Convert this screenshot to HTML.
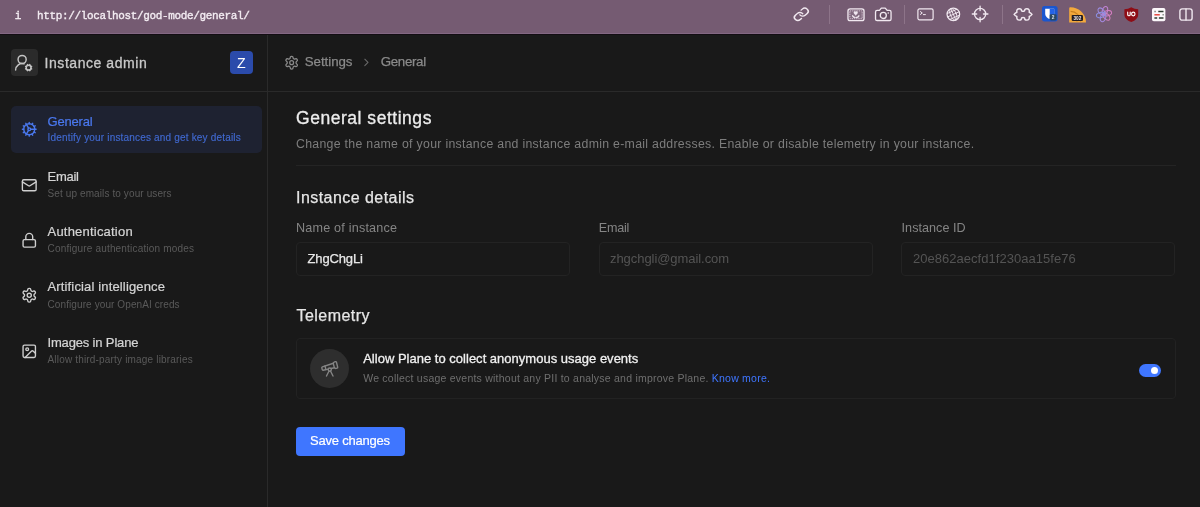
<!DOCTYPE html>
<html>
<head>
<meta charset="utf-8">
<title>General settings</title>
<style>
*{box-sizing:border-box;margin:0;padding:0}
html,body{width:1200px;height:507px;overflow:hidden;background:#191919}
body{font-family:"Liberation Sans",sans-serif;color:#e5e5e5;position:relative;-webkit-font-smoothing:antialiased}
.abs{position:absolute;white-space:nowrap;line-height:1}
svg{position:absolute;overflow:visible}
/* browser bar */
#bar{position:absolute;left:0;top:0;width:1200px;height:34px;background:#755b72;box-shadow:inset 0 -1px 0 #836883}
#barline{position:absolute;left:0;top:34px;width:1200px;height:1px;background:#130d13}
#bar .url{font-family:"Liberation Mono",monospace;font-weight:bold;color:#f3ecf2}
.sep{position:absolute;top:5px;width:1px;height:19px;background:#8d7489}
/* app */
#side{position:absolute;left:0;top:34px;width:268px;height:473px;border-right:1px solid #2a2a2a;background:#191919}
#hdr{position:absolute;left:0;top:34px;width:1200px;height:58px;border-bottom:1px solid #2a2a2a}
.active{position:absolute;left:10.5px;top:105.5px;width:251.5px;height:47.5px;background:#1e2231;border-radius:5px}
.t{font-size:13px;font-weight:normal;color:#d4d4d4;-webkit-text-stroke:0.22px #d4d4d4}
.s{font-size:10px;color:#5a5a5a}
.lbl{font-size:12.6px;color:#858585}
.inp{position:absolute;top:242px;height:33.5px;width:274px;border:1px solid #232323;border-radius:4px;background:#191919}
.h2{font-size:15.5px;color:#e6e6e6;-webkit-text-stroke:0.25px #e6e6e6}
</style>
</head>
<body>
<div id="root" style="position:absolute;left:0;top:0;width:1200px;height:507px;will-change:transform">
<!-- ============ browser toolbar ============ -->
<div id="bar">
  <span class="abs url" id="u0" style="left:14.7px;top:10.8px;font-size:11px;font-weight:normal;-webkit-text-stroke:0.35px #f3ecf2">i</span>
  <span class="abs url" id="u1" style="left:37px;top:10.8px;font-size:11px;letter-spacing:-0.35px;font-weight:normal;-webkit-text-stroke:0.35px #f3ecf2">http://localhost/god-mode/general/</span>
  <div class="sep" style="left:829px"></div>
  <div class="sep" style="left:904px"></div>
  <div class="sep" style="left:1001.5px"></div>
</div>

<!-- browser icons -->
<svg id="b_link" style="left:793.1px;top:6.7px" width="16.6" height="14.6" viewBox="0 0 24 24" preserveAspectRatio="none" fill="none" stroke="#f1e8f0" stroke-width="2.2" stroke-linecap="round" stroke-linejoin="round"><path d="M10 13a5 5 0 0 0 7.54.54l3-3a5 5 0 0 0-7.07-7.07l-1.72 1.71"/><path d="M14 11a5 5 0 0 0-7.54-.54l-3 3a5 5 0 0 0 7.07 7.07l1.71-1.71"/></svg>
<svg id="b_pic" style="left:847px;top:7.700px" width="18" height="13.600" viewBox="0 0 18 13.600" fill="none" stroke="#f1e8f0" stroke-width="1.300" stroke-linecap="round" stroke-linejoin="round"><rect x="0.950" y="0.950" width="16.100" height="11.700" rx="2.200" fill="rgba(255,255,255,0.100)"/><rect x="2.900" y="2.900" width="12.200" height="7.800" rx="0.400" stroke-width="0.900" stroke-dasharray="0.500 1.700" stroke="#dccbd9"/><path d="M8.750 7C5.400 5 7.200 2.300 8.750 3.900C10.300 2.300 12.100 5 8.750 7z" fill="#f1e8f0" stroke-width="0.400"/><path d="M5.600 7.800Q6.500 9.300 8 9.400M11.900 7.800Q11 9.300 9.500 9.400" stroke-width="1.400"/></svg>
<svg id="b_cam" style="left:873.90px;top:4.60px" width="18.600" height="18.600" viewBox="0 0 24 24" fill="none" stroke="#f1e8f0" stroke-width="1.700" stroke-linecap="round" stroke-linejoin="round"><path d="M14.500 4h-5L7 7H4a2 2 0 0 0-2 2v9a2 2 0 0 0 2 2h16a2 2 0 0 0 2-2V9a2 2 0 0 0-2-2h-3l-2.500-3z" fill="rgba(60,40,60,0.250)"/><circle cx="12" cy="13.500" r="3.900"/><path d="M18.400 10.400h.01" stroke-width="2"/></svg>
<svg id="b_term" style="left:917px;top:8px" width="17" height="13" viewBox="0 0 17 13" fill="none" stroke="#f1e8f0" stroke-width="1.2" stroke-linecap="round" stroke-linejoin="round" ><rect x="0.9" y="0.9" width="15.2" height="11" rx="1.6"/><path d="M3.4 3.6l1.9 1.4-1.9 1.4M6.4 6.6h2" stroke-width="1"/></svg>
<svg id="b_globe" style="left:946px;top:7px" width="15" height="15" viewBox="0 0 15 15" fill="none" stroke="#f1e8f0" stroke-width="1.250" stroke-linecap="round" stroke-linejoin="round"><circle cx="7.350" cy="7.350" r="6.300"/><g transform="rotate(-24 7.350 7.350)" stroke-width="0.850"><ellipse cx="7.350" cy="7.350" rx="2.900" ry="6.300"/><path d="M1.100 7.350h12.500M2.100 4.100h10.500M2.100 10.600h10.500M7.350 1.100v12.500"/></g></svg>
<svg id="b_cross" style="left:971px;top:5.4px" width="18" height="18" viewBox="0 0 18 18" fill="none" stroke="#f1e8f0" stroke-width="1.350" stroke-linecap="round"><circle cx="9.100" cy="9" r="5.600"/><path d="M9.100 1.200v4.400M9.100 12.400v4.400M1.300 9h4.400M12.500 9h4.400"/></svg>
<svg id="b_puz" style="left:1013px;top:7px" width="21" height="15" viewBox="0 0 21 15" fill="none" stroke="#f1e8f0" stroke-width="1.450" stroke-linecap="round" stroke-linejoin="round"><path d="M1.100 7.400Q2.300 5.800 3.900 5.300Q3.300 1.700 6.300 1.700Q8.600 1.700 8.600 3.900Q10.050 4.700 11.500 3.900Q11.500 1.700 13.800 1.700Q16.800 1.700 16.200 5.300Q17.800 5.800 19 7.400Q17.800 9 16.200 9.500Q16.800 13.100 13.800 13.100Q11.500 13.100 11.500 10.900Q10.050 10.100 8.600 10.900Q8.600 13.100 6.300 13.100Q3.300 13.100 3.900 9.500Q2.300 9 1.100 7.400z"/></svg>
<svg id="b_bw" style="left:1042.3px;top:6.4px" width="16" height="15.6" viewBox="0 0 16 15.600"><rect x="0" y="0" width="15.600" height="15.400" rx="2.600" fill="#1a56cf"/><path d="M3.200 2.800h9v5.200c0 2.700-2.700 4.400-4.500 5.100-1.800-.7-4.500-2.400-4.500-5.100z" fill="#fff"/><path d="M7.700 2.800h4.500v5.200c0 2.700-2.700 4.400-4.500 5.100z" fill="#2463e6"/><rect x="7.700" y="8.200" width="6.900" height="6.200" rx="1.300" fill="#2b475e"/><text x="11.150" y="13.100" font-family="Liberation Sans, sans-serif" font-size="4.800" font-weight="bold" fill="#d8e4ee" text-anchor="middle">2</text></svg>
<svg id="b_rss" style="left:1068px;top:6.500px" width="18.500" height="15.800" viewBox="0 0 18.500 15.800"><path d="M1.200 15.500V1.500c0-.7.500-1.200 1.200-1.200 8.600 0 15.600 6.700 15.600 15.200z" fill="#f3a93c"/><path d="M2.600 4.400a10 10 0 0 1 10 10M2.600 8a6.400 6.400 0 0 1 6.400 6.400" stroke="#c9801f" stroke-width="1.100" fill="none"/><rect x="3.700" y="8.100" width="11.300" height="6" rx="1.300" fill="#221c20"/><text x="9.350" y="12.800" font-family="Liberation Sans, sans-serif" font-size="4.700" font-weight="bold" fill="#efe9ed" text-anchor="middle">302</text></svg>
<svg id="b_sw" style="left:1096.2px;top:6.300px" width="16" height="16.200" viewBox="0 0 16 16.200" opacity="0.920"><ellipse cx="8" cy="4.600" rx="2.600" ry="4.300" transform="rotate(15 8 8.100)" stroke="#c986dc" stroke-width="1.050" fill="none"/><ellipse cx="8" cy="4.600" rx="2.600" ry="4.300" transform="rotate(75 8 8.100)" stroke="#dd7fc9" stroke-width="1.050" fill="none"/><ellipse cx="8" cy="4.600" rx="2.600" ry="4.300" transform="rotate(135 8 8.100)" stroke="#d884c4" stroke-width="1.050" fill="none"/><ellipse cx="8" cy="4.600" rx="2.600" ry="4.300" transform="rotate(195 8 8.100)" stroke="#a88ce6" stroke-width="1.050" fill="none"/><ellipse cx="8" cy="4.600" rx="2.600" ry="4.300" transform="rotate(255 8 8.100)" stroke="#8d95ee" stroke-width="1.050" fill="none"/><ellipse cx="8" cy="4.600" rx="2.600" ry="4.300" transform="rotate(315 8 8.100)" stroke="#9f8fe9" stroke-width="1.050" fill="none"/></svg>
<svg id="b_ub" style="left:1124.2px;top:6.8px" width="14.6" height="15.4" viewBox="0 0 14.600 15.400"><path d="M7.300.2c2 1.300 4.400 1.900 6.900 2v5.200c0 3.900-3.600 6.400-6.900 7.600C4 13.800 .4 11.300.4 7.400V2.200c2.500-.1 4.900-.7 6.900-2z" fill="#8e0d16"/><path d="M3.700 5.200v2.300c0 1.700 2.500 1.700 2.500 0V5.200" stroke="#fff" stroke-width="1.150" fill="none" stroke-linecap="round" stroke-linejoin="round"/><ellipse cx="9.300" cy="7" rx="1.700" ry="1.850" stroke="#fff" stroke-width="1.150" fill="none"/></svg>
<svg id="b_list" style="left:1151.8px;top:7.8px" width="13.400" height="13.200" viewBox="0 0 13.400 13.200"><rect x="0" y="0" width="13.400" height="13.200" rx="1.800" fill="#fbf7fa"/><path d="M2.600 3.600h.9M6.300 3.600h5.200M10.700 6.800h.8M2.400 10h2.800M6.900 10h4.600" stroke="#2c3a2e" stroke-width="1.500" stroke-linecap="butt"/><path d="M2.400 6.800h5.400" stroke="#e5483f" stroke-width="1.500"/></svg>
<svg id="b_split" style="left:1179.3px;top:8.2px" width="14" height="13" viewBox="0 0 14 13" fill="none" stroke="#f1e8f0" stroke-width="1.2" stroke-linecap="round" stroke-linejoin="round" ><rect x="0.900" y="0.900" width="12.200" height="11.200" rx="2.200" stroke-width="1.400"/><path d="M7 1v11" stroke-width="1.400"/></svg>
<!-- ============ sidebar + header frame ============ -->
<div id="side"></div>
<div id="hdr"></div>
<div id="barline"></div>

<!-- header left -->
<div class="abs" style="left:10.5px;top:49px;width:27.5px;height:27px;background:#2b2b2b;border-radius:4px"></div>
<span class="abs" id="ia" style="left:44.6px;top:55.9px;font-size:14px;color:#c9c9c9;letter-spacing:0.55px;-webkit-text-stroke:0.3px #c9c9c9">Instance admin</span>
<div class="abs" style="left:230px;top:50.8px;width:23.3px;height:23.5px;background:#2b4bab;border-radius:4px"></div>
<span class="abs" id="z" style="left:237.1px;top:55.9px;font-size:14.2px;color:#fff">Z</span>

<!-- breadcrumb -->
<span class="abs" id="bc1" style="left:304.7px;top:54.9px;font-size:13.3px;color:#8a8a8a;letter-spacing:-0.03px;-webkit-text-stroke:0.25px #8a8a8a">Settings</span>
<span class="abs" id="bc2" style="left:380.8px;top:54.9px;font-size:13.3px;color:#8a8a8a;letter-spacing:-0.33px;-webkit-text-stroke:0.25px #8a8a8a">General</span>

<!-- sidebar items -->
<div class="active"></div>
<span class="abs t" id="t1" style="left:47.5px;top:115px;color:#4a78ee;-webkit-text-stroke-color:#4a78ee;letter-spacing:-0.17px">General</span>
<span class="abs s" id="s1" style="left:47.5px;top:133.3px;color:#4069d0;letter-spacing:0.18px;-webkit-text-stroke:0.15px #4069d0">Identify your instances and get key details</span>

<span class="abs t" id="t2" style="left:47.5px;top:170.1px;letter-spacing:-0.27px">Email</span>
<span class="abs s" id="s2" style="left:47.5px;top:188.9px;letter-spacing:0.11px">Set up emails to your users</span>

<span class="abs t" id="t3" style="left:47.5px;top:225.1px;letter-spacing:0.21px">Authentication</span>
<span class="abs s" id="s3" style="left:47.5px;top:244.2px;letter-spacing:0.18px">Configure authentication modes</span>

<span class="abs t" id="t4" style="left:47.5px;top:280.4px;letter-spacing:0.15px">Artificial intelligence</span>
<span class="abs s" id="s4" style="left:47.5px;top:299.6px;letter-spacing:0.1px">Configure your OpenAI creds</span>

<span class="abs t" id="t5" style="left:47.5px;top:336.4px;letter-spacing:-0.16px">Images in Plane</span>
<span class="abs s" id="s5" style="left:47.5px;top:355.1px;letter-spacing:0.18px">Allow third-party image libraries</span>

<!-- ============ main content ============ -->
<span class="abs" id="m1" style="left:296px;top:110px;font-size:17.5px;color:#ededed;letter-spacing:0.53px;-webkit-text-stroke:0.3px #ededed">General settings</span>
<span class="abs" id="m2" style="left:296px;top:137.6px;font-size:12.3px;color:#7d7d7d;letter-spacing:0.3px">Change the name of your instance and instance admin e-mail addresses. Enable or disable telemetry in your instance.</span>
<div class="abs" style="left:296px;top:164.6px;width:880px;height:1px;background:#242424"></div>

<span class="abs h2" id="m3" style="left:296px;top:189.7px;letter-spacing:0.45px;font-size:16px">Instance details</span>
<span class="abs lbl" id="l1" style="left:296px;top:221.7px;letter-spacing:0.2px">Name of instance</span>
<span class="abs lbl" id="l2" style="left:598.7px;top:221.7px;letter-spacing:-0.2px">Email</span>
<span class="abs lbl" id="l3" style="left:901.6px;top:221.7px;letter-spacing:0.03px">Instance ID</span>
<div class="inp" style="left:296px"></div>
<div class="inp" style="left:598.7px"></div>
<div class="inp" style="left:901.4px"></div>
<span class="abs" id="v1" style="left:307.5px;top:251.5px;font-size:13px;color:#e8e8e8;-webkit-text-stroke:0.25px #e8e8e8;letter-spacing:-0.13px">ZhgChgLi</span>
<span class="abs" id="v2" style="left:610px;top:251.5px;font-size:13px;color:#545454;letter-spacing:-0.06px">zhgchgli@gmail.com</span>
<span class="abs" id="v3" style="left:913px;top:251.5px;font-size:13px;color:#545454;letter-spacing:0.03px">20e862aecfd1f230aa15fe76</span>

<span class="abs h2" id="m4" style="left:296.5px;top:307.7px;letter-spacing:0.45px;font-size:16px">Telemetry</span>
<div class="abs" style="left:296px;top:337.8px;width:879.5px;height:61.6px;border:1px solid #222222;border-radius:4px"></div>
<div class="abs" style="left:310px;top:348.8px;width:39.3px;height:39.3px;border-radius:50%;background:#2e2e2e"></div>
<span class="abs" id="c1" style="left:363.2px;top:352px;font-size:13px;color:#f0f0f0;-webkit-text-stroke:0.3px #f0f0f0;letter-spacing:0.01px">Allow Plane to collect anonymous usage events</span>
<span class="abs" id="c2" style="left:363.2px;top:372.5px;font-size:10.5px;color:#6f6f6f;letter-spacing:0.23px">We collect usage events without any PII to analyse and improve Plane. <span style="color:#3f76ff">Know more.</span></span>

<!-- app icons -->
<svg id="i_uc" style="left:14.1px;top:53.2px" width="19.5" height="19.5" viewBox="0 0 24 24" fill="none" stroke="#c4c4c4" stroke-width="1.8" stroke-linecap="round" stroke-linejoin="round"><path d="M2 21a8 8 0 0 1 10.434-7.62"/><circle cx="10" cy="8" r="5"/><circle cx="18" cy="18" r="3"/><path d="m19.500 14.300-.4.900"/><path d="m16.900 20.800-.4.900"/><path d="m21.700 19.500-.900-.4"/><path d="m15.200 16.900-.900-.4"/><path d="m21.700 16.500-.900.4"/><path d="m15.200 19.100-.900.4"/><path d="m19.500 21.700-.4-.900"/><path d="m16.900 15.200-.4-.900"/></svg>
<svg id="i_hg" style="left:283.75px;top:55.45px" width="15.3" height="15.3" viewBox="0 0 24 24" fill="none" stroke="#8a8a8a" stroke-width="2" stroke-linecap="round" stroke-linejoin="round"><path d="M12.22 2h-.44a2 2 0 0 0-2 2v.18a2 2 0 0 1-1 1.73l-.43.25a2 2 0 0 1-2 0l-.15-.08a2 2 0 0 0-2.73.73l-.22.38a2 2 0 0 0 .73 2.73l.15.1a2 2 0 0 1 1 1.72v.51a2 2 0 0 1-1 1.74l-.15.09a2 2 0 0 0-.73 2.73l.22.38a2 2 0 0 0 2.73.73l.15-.08a2 2 0 0 1 2 0l.43.25a2 2 0 0 1 1 1.73V20a2 2 0 0 0 2 2h.44a2 2 0 0 0 2-2v-.18a2 2 0 0 1 1-1.73l.43-.25a2 2 0 0 1 2 0l.15.08a2 2 0 0 0 2.73-.73l.22-.39a2 2 0 0 0-.73-2.73l-.15-.08a2 2 0 0 1-1-1.74v-.5a2 2 0 0 1 1-1.74l.15-.09a2 2 0 0 0 .73-2.73l-.22-.38a2 2 0 0 0-2.73-.73l-.15.08a2 2 0 0 1-2 0l-.43-.25a2 2 0 0 1-1-1.73V4a2 2 0 0 0-2-2z"/><circle cx="12" cy="12" r="3"/></svg>
<svg id="i_ch" style="left:360.1px;top:56.4px" width="12.8" height="12.8" viewBox="0 0 24 24" fill="none" stroke="#6a6a6a" stroke-width="2" stroke-linecap="round" stroke-linejoin="round"><path d="m9 18 6-6-6-6"/></svg>
<svg id="i1" style="left:20.75px;top:121.05px" width="16.5" height="16.5" viewBox="0 0 24 24" fill="none" stroke="#4a78ee" stroke-width="2" stroke-linecap="round" stroke-linejoin="round"><path d="M12 20a8 8 0 1 0 0-16 8 8 0 0 0 0 16Z"/><path d="M12 14a2 2 0 1 0 0-4 2 2 0 0 0 0 4Z"/><path d="M12 2v2"/><path d="M12 22v-2"/><path d="m17 20.66-1-1.73"/><path d="M11 10.27 7 3.34"/><path d="m20.66 17-1.73-1"/><path d="m3.34 7 1.73 1"/><path d="M14 12h8"/><path d="M2 12h2"/><path d="m20.66 7-1.73 1"/><path d="m3.34 17 1.73-1"/><path d="m17 3.34-1 1.73"/><path d="m11 13.73-4 6.93"/></svg>
<svg id="i2" style="left:20.75px;top:176.75px" width="16.5" height="16.5" viewBox="0 0 24 24" fill="none" stroke="#cfcfcf" stroke-width="2" stroke-linecap="round" stroke-linejoin="round"><rect width="20" height="16" x="2" y="4" rx="2"/><path d="m22 7-8.97 5.7a1.94 1.94 0 0 1-2.06 0L2 7"/></svg>
<svg id="i3" style="left:20.85px;top:231.75px" width="16.5" height="16.5" viewBox="0 0 24 24" fill="none" stroke="#cfcfcf" stroke-width="2" stroke-linecap="round" stroke-linejoin="round"><rect width="18" height="11" x="3" y="11" rx="2" ry="2"/><path d="M7 11V7a5 5 0 0 1 10 0v4"/></svg>
<svg id="i4" style="left:20.75px;top:286.85px" width="16.5" height="16.5" viewBox="0 0 24 24" fill="none" stroke="#cfcfcf" stroke-width="2" stroke-linecap="round" stroke-linejoin="round"><path d="M12.22 2h-.44a2 2 0 0 0-2 2v.18a2 2 0 0 1-1 1.73l-.43.25a2 2 0 0 1-2 0l-.15-.08a2 2 0 0 0-2.73.73l-.22.38a2 2 0 0 0 .73 2.73l.15.1a2 2 0 0 1 1 1.72v.51a2 2 0 0 1-1 1.74l-.15.09a2 2 0 0 0-.73 2.73l.22.38a2 2 0 0 0 2.73.73l.15-.08a2 2 0 0 1 2 0l.43.25a2 2 0 0 1 1 1.73V20a2 2 0 0 0 2 2h.44a2 2 0 0 0 2-2v-.18a2 2 0 0 1 1-1.73l.43-.25a2 2 0 0 1 2 0l.15.08a2 2 0 0 0 2.73-.73l.22-.39a2 2 0 0 0-.73-2.73l-.15-.08a2 2 0 0 1-1-1.74v-.5a2 2 0 0 1 1-1.74l.15-.09a2 2 0 0 0 .73-2.73l-.22-.38a2 2 0 0 0-2.73-.73l-.15.08a2 2 0 0 1-2 0l-.43-.25a2 2 0 0 1-1-1.73V4a2 2 0 0 0-2-2z"/><circle cx="12" cy="12" r="3"/></svg>
<svg id="i5" style="left:20.75px;top:342.65px" width="16.5" height="16.5" viewBox="0 0 24 24" fill="none" stroke="#cfcfcf" stroke-width="2" stroke-linecap="round" stroke-linejoin="round"><rect width="18" height="18" x="3" y="3" rx="2" ry="2"/><circle cx="9" cy="9" r="2"/><path d="m21 15-3.086-3.086a2 2 0 0 0-2.828 0L6 21"/></svg>
<svg id="i_t" style="left:319.95px;top:359.05px" width="19.5" height="19.5" viewBox="0 0 24 24" fill="none" stroke="#858585" stroke-width="1.7" stroke-linecap="round" stroke-linejoin="round"><path d="m10.065 12.493-6.18 1.318a.934.934 0 0 1-1.108-.702l-.537-2.15a1.07 1.07 0 0 1 .691-1.265l13.504-4.44"/><path d="m13.56 11.747 4.332-.924"/><path d="m16 21-3.105-6.21"/><path d="M16.485 5.94a2 2 0 0 1 1.455-2.425l1.09-.272a1 1 0 0 1 1.212.727l1.515 6.06a1 1 0 0 1-.727 1.213l-1.09.272a2 2 0 0 1-2.425-1.455z"/><path d="m6.158 8.633 1.114 4.456"/><path d="m8 21 3.105-6.21"/><circle cx="12" cy="13" r="2"/></svg>
<!-- toggle -->
<div class="abs" style="left:1139px;top:363.6px;width:21.7px;height:13.8px;border-radius:7px;background:#3f76ff"></div>
<div class="abs" style="left:1150.6px;top:366.6px;width:7.7px;height:7.7px;border-radius:50%;background:#fff"></div>

<!-- button -->
<div class="abs" style="left:296px;top:427px;width:109px;height:28.6px;border-radius:4px;background:#3f76ff"></div>
<span class="abs" id="btn" style="left:310px;top:434.3px;font-size:13px;color:#fff;-webkit-text-stroke:0.2px #fff;letter-spacing:-0.22px">Save changes</span>

</div>
</body>
</html>
